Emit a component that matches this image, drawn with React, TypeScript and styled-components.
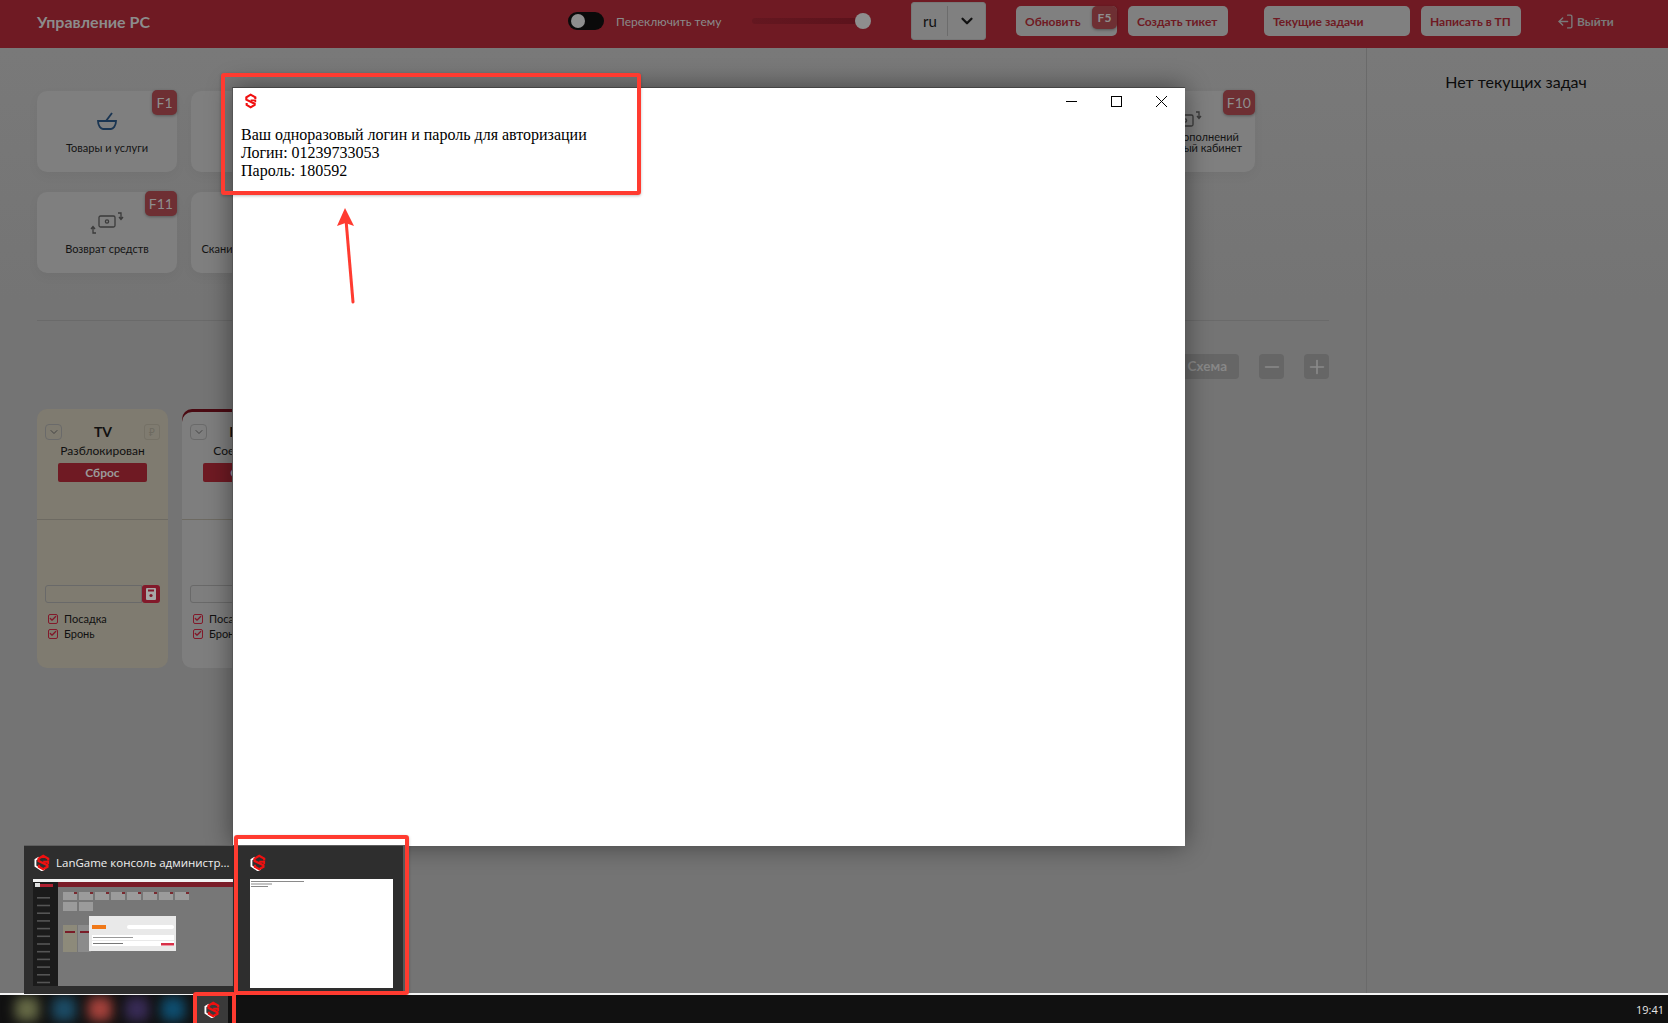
import styled, { createGlobalStyle } from 'styled-components';
import { ChevronDown, Minus, Plus, LogOut, Check } from 'lucide-react';

const GlobalStyle = createGlobalStyle`
    html, body { margin: 0; padding: 0; }
    body { font-family: 'Lato', 'Noto Sans', sans-serif; background: #767676; overflow: hidden; }
    * { box-sizing: border-box; }
`;

// карточки 2-7 целиком закрыты окном, текста на них не видно
const topCards = [
    { id: 1, title: 'Товары и услуги', key: 'F1', icon: 'bowl' },
    { id: 2 },
    { id: 3 },
    { id: 4 },
    { id: 5 },
    { id: 6 },
    { id: 7 },
    { id: 8, title: 'История пополнений через личный кабинет', key: 'F10', icon: 'money' },
    { id: 9, title: 'Возврат средств', key: 'F11', icon: 'money' },
    { id: 10, title: 'Сканирование\u00a0QR\u2011кода' },
];

const pcCards = [
    { name: 'TV', status: 'Разблокирован', warm: true },
    { name: 'PC 10', status: 'Соединение', warm: false },
];

const blurs = ['#666a46', '#1c4c66', '#a6423c', '#382b56', '#0e4e70'];

const Logo = ({ size, withWhite }: { size: number; withWhite?: boolean }) => (
    <svg width={size} height={size} viewBox='0 0 24 24' fill='none'>
        {withWhite && <polyline points='7,5 2,8 2,17 11,23 15,21' stroke='#fff' strokeWidth='2.6' />}
        <polyline
            points='20,9 20,6.5 13,2.5 6.5,6.5 6.5,10 19,16 19,18 13,21.5 7,18 7,15'
            stroke='#f01010'
            strokeWidth='3.2'
            strokeLinejoin='miter'
        />
        <polyline points='13,11 20,11 20,14' stroke='#f01010' strokeWidth='2.6' />
    </svg>
);

const BowlIcon = () => (
    <svg width='22' height='22' viewBox='0 0 22 22' fill='none' stroke='#1a3552' strokeWidth='1.8'>
        <path d='M2 10h18c0 5-3 8-5 8H7c-2 0-5-3-5-8z' />
        <path d='M10 10l6-8' />
    </svg>
);

const MoneyIcon = () => (
    <svg width='34' height='24' viewBox='0 0 34 24' fill='none' stroke='#3b3b3b' strokeWidth='1.3'>
        <rect x='9' y='5' width='16' height='11' rx='1.5' />
        <circle cx='17' cy='10.5' r='1.6' />
        <path d='M28 2h3v6M29 6l2 2.5L33 6' />
        <path d='M6 22H3v-6M1 18l2-2.5L5 18' />
    </svg>
);

const SaveIcon = () => (
    <svg width='10' height='12' viewBox='0 0 10 12'>
        <path d='M1 0h8a1 1 0 0 1 1 1v10a1 1 0 0 1-1 1H1a1 1 0 0 1-1-1V1a1 1 0 0 1 1-1z' fill='#a8a8a8' />
        <rect x='2' y='1.5' width='6' height='2' fill='#82192a' />
        <circle cx='5' cy='7.5' r='1.6' fill='#82192a' />
    </svg>
);

const MiniAdmin = () => (
    <svg width='200' height='107' viewBox='0 0 200 107'>
        <rect width='200' height='107' fill='#777' />
        <rect width='200' height='3' fill='#f2f2f2' />
        <rect y='3' width='25' height='104' fill='#1b1b1b' />
        <rect x='2' y='4' width='5' height='4' fill='#ddd' />
        <rect x='7' y='5' width='13' height='3' fill='#b02030' />
        <rect x='25' y='3' width='175' height='5' fill='#7a1c28' />
        {[0, 1, 2, 3, 4, 5, 6, 7, 8, 9, 10, 11].map(i => (
            <rect key={i} x='4' y={18 + i * 7.7} width='13' height='1.6' fill='#555' />
        ))}
        {[0, 1, 2, 3, 4, 5, 6, 7].map(i => (
            <g key={i}>
                <rect x={30 + i * 16} y='13' width='14' height='8' fill='#9b9b9b' />
                <rect x={41 + i * 16} y='13' width='3' height='2' fill='#7a2a30' />
            </g>
        ))}
        {[0, 1].map(i => (
            <rect key={i} x={30 + i * 16} y='23' width='14' height='9' fill='#9b9b9b' />
        ))}
        <rect x='30' y='46' width='14' height='27' fill='#8d8a7a' />
        <rect x='45' y='46' width='13' height='27' fill='#8b8b8b' />
        <rect x='32' y='52' width='10' height='2' fill='#7a1c28' />
        <rect x='47' y='52' width='9' height='2' fill='#7a1c28' />
        <rect x='56' y='37' width='87' height='35' fill='#e9e9e9' />
        <rect x='59' y='46' width='14' height='4' fill='#f07818' />
        <rect x='94' y='46' width='47' height='4' rx='2' fill='#fff' />
        <rect x='59' y='56' width='82' height='5' fill='#fff' />
        <rect x='59' y='62' width='82' height='5' fill='#fff' />
        <rect x='128' y='64' width='13' height='2.5' fill='#d83048' />
        <rect x='60' y='58' width='40' height='1' fill='#999' />
        <rect x='60' y='64' width='30' height='1' fill='#777' />
    </svg>
);

const MiniLogin = () => (
    <svg width='143' height='109' viewBox='0 0 143 109'>
        <rect width='143' height='109' fill='#fff' />
        <rect x='1' y='2' width='53' height='1' fill='#8a8a8a' />
        <rect x='1' y='4.5' width='21' height='1' fill='#8a8a8a' />
        <rect x='1' y='7' width='17' height='1' fill='#8a8a8a' />
    </svg>
);

const App = () => {
    return (
        <Page>
            <GlobalStyle />
            <TopBar>
                <Title>Управление РС</Title>
                <Toggle>
                    <Knob />
                </Toggle>
                <ToggleLabel>Переключить тему</ToggleLabel>
                <Slider>
                    <SliderKnob />
                </Slider>
                <LangSelect>
                    <span>ru</span>
                    <LangDivider />
                    <ChevronDown size={18} strokeWidth={3} color='#111' />
                </LangSelect>
                <BarButton $width={101} $left={30}>
                    Обновить
                    <KeyBadge $width={25}>F5</KeyBadge>
                </BarButton>
                <BarButton $width={100} $left={11}>
                    Создать тикет
                </BarButton>
                <BarButton $width={146} $left={36}>
                    Текущие задачи
                </BarButton>
                <BarButton $width={100} $left={11}>
                    Написать в ТП
                </BarButton>
                <Logout>
                    <LogOut size={17} style={{ transform: 'scaleX(-1)' }} />
                    Выйти
                </Logout>
            </TopBar>

            <Main>
                <Content>
                    <CardGrid>
                        {topCards.map(card => (
                            <ActionCard key={card.id}>
                                {card.key && <KeyCorner>{card.key}</KeyCorner>}
                                <IconSlot>
                                    {card.icon === 'bowl' && <BowlIcon />}
                                    {card.icon === 'money' && <MoneyIcon />}
                                </IconSlot>
                                {card.title && <CardTitle>{card.title}</CardTitle>}
                            </ActionCard>
                        ))}
                    </CardGrid>
                    <Divider />
                    <ZoomRow>
                        <SchemeButton>Схема</SchemeButton>
                        <SquareButton>
                            <Minus size={22} strokeWidth={1.8} />
                        </SquareButton>
                        <SquareButton>
                            <Plus size={22} strokeWidth={1.8} />
                        </SquareButton>
                    </ZoomRow>
                    <PcRow>
                        {pcCards.map(pc => (
                            <PcCard key={pc.name} $warm={pc.warm}>
                                <PcHead>
                                    <SmallBox>
                                        <ChevronDown size={12} />
                                    </SmallBox>
                                    <PcName>{pc.name}</PcName>
                                    <RubleBox>₽</RubleBox>
                                </PcHead>
                                <PcStatus>{pc.status}</PcStatus>
                                <ResetButton>Сброс</ResetButton>
                                <PcDivider />
                                <CommentRow>
                                    <CommentInput />
                                    <SaveButton>
                                        <SaveIcon />
                                    </SaveButton>
                                </CommentRow>
                                <CheckList>
                                    <CheckRow>
                                        <CheckBox>
                                            <Check size={9} strokeWidth={4} />
                                        </CheckBox>
                                        Посадка
                                    </CheckRow>
                                    <CheckRow>
                                        <CheckBox>
                                            <Check size={9} strokeWidth={4} />
                                        </CheckBox>
                                        Бронь
                                    </CheckRow>
                                </CheckList>
                            </PcCard>
                        ))}
                    </PcRow>
                </Content>
                <TaskPanel>Нет текущих задач</TaskPanel>
            </Main>

            <Taskbar>
                <BlurGroup>
                    {blurs.map(color => (
                        <BlurIcon key={color} $color={color} />
                    ))}
                </BlurGroup>
                <ActiveTask>
                    <Logo size={17} withWhite />
                </ActiveTask>
                <Clock>19:41</Clock>
            </Taskbar>

            {/* Окно браузера поверх страницы */}
            <LoginWindow>
                <WindowHead>
                    <Logo size={16} />
                    <WindowControls>
                        <svg width='11' height='11' viewBox='0 0 11 11' stroke='#000'>
                            <line x1='0' y1='5.5' x2='11' y2='5.5' />
                        </svg>
                        <svg width='11' height='11' viewBox='0 0 11 11' fill='none' stroke='#000'>
                            <rect x='0.5' y='0.5' width='10' height='10' />
                        </svg>
                        <svg width='11' height='11' viewBox='0 0 11 11' stroke='#000'>
                            <line x1='0' y1='0' x2='11' y2='11' />
                            <line x1='11' y1='0' x2='0' y2='11' />
                        </svg>
                    </WindowControls>
                </WindowHead>
                <WindowText>
                    Ваш одноразовый логин и пароль для авторизации
                    <br />
                    Логин: 01239733053
                    <br />
                    Пароль: 180592
                </WindowText>
            </LoginWindow>

            {/* Превью окон на панели задач */}
            <Preview>
                <PreviewPane $width={209}>
                    <PreviewHead $left={10}>
                        <Logo size={17} withWhite />
                        <PreviewTitle>LanGame консоль администр...</PreviewTitle>
                    </PreviewHead>
                    <PreviewShot $left={9}>
                        <MiniAdmin />
                    </PreviewShot>
                </PreviewPane>
                <PreviewPane $width={170}>
                    <PreviewHead $left={17}>
                        <Logo size={17} withWhite />
                    </PreviewHead>
                    <PreviewShot $left={17}>
                        <MiniLogin />
                    </PreviewShot>
                </PreviewPane>
            </Preview>

            {/* Красные пометки */}
            <MarkFrame $x={221} $y={73} $w={420} $h={122} />
            <MarkFrame $x={234} $y={835} $w={175} $h={160} />
            <TaskMark />
            <ArrowMark viewBox='0 0 30 100' width='30' height='100'>
                <line x1='22' y1='94' x2='15' y2='12' stroke='#ff3b30' strokeWidth='3' strokeLinecap='round' />
                <path d='M14 0l9 18-8.5-3-8.5 3z' fill='#ff3b30' />
            </ArrowMark>
        </Page>
    );
};

const Page = styled.div`
    position: relative;
    width: 1668px;
    height: 1023px;
    display: flex;
    flex-direction: column;
    overflow: hidden;
    background: linear-gradient(#7a7a7a, #747474 300px);
`;

const TopBar = styled.header`
    height: 48px;
    flex-shrink: 0;
    display: flex;
    align-items: center;
    padding: 0 0 6px 37px;
    background: #6f1a23;
    color: #8a8a8a;
`;

const Title = styled.div`
    width: 531px;
    font-size: 16px;
    font-weight: 700;
    color: #8c8c8c;
`;

const Toggle = styled.div`
    width: 36px;
    height: 18px;
    padding: 2px 3px;
    border-radius: 9px;
    background: #0a0a0a;
`;

const Knob = styled.div`
    width: 14px;
    height: 14px;
    border-radius: 50%;
    background: #8e8e8e;
`;

const ToggleLabel = styled.div`
    width: 136px;
    margin-left: 12px;
    font-size: 12px;
`;

const Slider = styled.div`
    position: relative;
    width: 119px;
    height: 6px;
    border-radius: 3px;
    background: linear-gradient(90deg, #641720, #5b121b);
`;

const SliderKnob = styled.div`
    position: absolute;
    right: 0;
    top: -5px;
    width: 16px;
    height: 16px;
    border-radius: 50%;
    background: #8e8e8e;
`;

const LangSelect = styled.div`
    width: 75px;
    height: 38px;
    margin-left: 40px;
    display: flex;
    align-items: center;
    gap: 10px;
    padding-left: 11px;
    border-radius: 3px;
    border: 1px solid #777;
    background: #808080;
    color: #111;
    font-size: 15px;
`;

const LangDivider = styled.div`
    width: 1px;
    height: 30px;
    background: #6c6c6c;
`;

const BarButton = styled.div<{ $width: number; $left: number }>`
    position: relative;
    width: ${p => p.$width}px;
    height: 30px;
    margin-left: ${p => p.$left}px;
    padding-left: 9px;
    display: flex;
    align-items: center;
    border-radius: 5px;
    background: #808080;
    color: #6f1a23;
    font-size: 12px;
    font-weight: 700;
    white-space: nowrap;
`;

const KeyBadge = styled.span<{ $width: number }>`
    position: absolute;
    top: 0;
    right: 0;
    width: ${p => p.$width}px;
    height: 23px;
    display: flex;
    align-items: center;
    justify-content: center;
    border-radius: 5px;
    background: #6e2f33;
    color: #8e8e8e;
    font-size: 12px;
    font-weight: 700;
    box-shadow: 0 1px 3px rgba(0, 0, 0, 0.35);
`;

const Logout = styled.div`
    margin-left: 36px;
    display: flex;
    align-items: center;
    gap: 3px;
    color: #7a7a7a;
    font-size: 12px;
    font-weight: 700;
`;

const Main = styled.main`
    flex: 1;
    display: flex;
    min-height: 0;
`;

const Content = styled.div`
    width: 1367px;
    padding: 43px 37px 0 37px;
    border-right: 1px solid #6a6a6a;
`;

const CardGrid = styled.div`
    display: grid;
    grid-template-columns: repeat(8, 140px);
    grid-auto-rows: 81px;
    gap: 20px 14px;
`;

const ActionCard = styled.div`
    position: relative;
    display: flex;
    flex-direction: column;
    align-items: center;
    padding-top: 21px;
    border-radius: 10px;
    background: #7f7f7f;
    box-shadow: 0 4px 12px rgba(0, 0, 0, 0.04);
`;

const KeyCorner = styled.span`
    position: absolute;
    top: -1px;
    right: 0;
    min-width: 25px;
    height: 25px;
    padding: 0 4px;
    display: flex;
    align-items: center;
    justify-content: center;
    border-radius: 5px;
    background: #6e2f33;
    color: #8e8e8e;
    font-size: 14px;
    box-shadow: 0 1px 3px rgba(0, 0, 0, 0.3);
`;

const IconSlot = styled.div`
    height: 20px;
    display: flex;
    align-items: center;
    justify-content: center;
`;

const CardTitle = styled.div`
    height: 21px;
    padding: 0 8px;
    display: flex;
    align-items: flex-end;
    text-align: center;
    font-size: 11px;
    line-height: 11px;
    color: #141414;
`;

const Divider = styled.div`
    height: 1px;
    margin-top: 47px;
    background: #6a6a6a;
`;

const ZoomRow = styled.div`
    height: 25px;
    margin-top: 33px;
    display: flex;
    justify-content: flex-end;
    gap: 20px;
`;

const SchemeButton = styled.div`
    width: 100px;
    display: flex;
    align-items: center;
    justify-content: flex-end;
    padding: 0 12px 2px 0;
    border-radius: 4px;
    background: #666;
    color: #888;
    font-size: 13.5px;
    font-weight: 700;
`;

const SquareButton = styled.div`
    width: 25px;
    display: flex;
    align-items: center;
    justify-content: center;
    border-radius: 4px;
    background: #666;
    color: #8a8a8a;
`;

const PcRow = styled.div`
    margin-top: 30px;
    display: flex;
    gap: 14px;
`;

const PcCard = styled.div<{ $warm: boolean }>`
    width: 131px;
    height: 259px;
    padding: 14px 8px 0;
    display: flex;
    flex-direction: column;
    border-radius: 10px;
    background: ${p => (p.$warm ? '#7f7b70' : '#7e7e7e')};
    box-shadow: ${p => (p.$warm ? 'none' : 'inset 0 3px 0 #4a0a12')};
    color: #111;
`;

const PcHead = styled.div`
    display: flex;
    align-items: center;
    justify-content: space-between;
`;

const SmallBox = styled.div`
    width: 17px;
    height: 16px;
    display: flex;
    align-items: center;
    justify-content: center;
    border: 1px solid #6a6a6a;
    border-radius: 4px;
    color: #444;
`;

const PcName = styled.div`
    font-size: 14px;
    font-weight: 700;
`;

const RubleBox = styled.div`
    width: 16px;
    height: 16px;
    display: flex;
    align-items: center;
    justify-content: center;
    border: 1px solid #757166;
    border-radius: 3px;
    color: #6d6a60;
    font-size: 10px;
`;

const PcStatus = styled.div`
    margin-top: 2px;
    text-align: center;
    font-size: 12px;
    line-height: 18px;
    white-space: nowrap;
`;

const ResetButton = styled.div`
    width: 89px;
    height: 19px;
    margin: 3px auto 0;
    display: flex;
    align-items: center;
    justify-content: center;
    border-radius: 2px;
    background: #6f1a23;
    color: #9a9a9a;
    font-size: 12px;
    font-weight: 700;
`;

const PcDivider = styled.div`
    height: 1px;
    margin: 37px -8px 0;
    background: #6d6a62;
`;

const CommentRow = styled.div`
    margin-top: 65px;
    height: 18px;
    display: flex;
`;

const CommentInput = styled.div`
    flex: 1;
    border: 1px solid #696969;
    border-radius: 3px 0 0 3px;
`;

const SaveButton = styled.div`
    width: 18px;
    display: flex;
    align-items: center;
    justify-content: center;
    border-radius: 3px;
    background: #82192a;
`;

const CheckList = styled.div`
    margin-top: 8px;
`;

const CheckRow = styled.div`
    height: 15px;
    padding-left: 3px;
    display: flex;
    align-items: center;
    gap: 6px;
    font-size: 11px;
`;

const CheckBox = styled.span`
    width: 10px;
    height: 10px;
    display: flex;
    align-items: center;
    justify-content: center;
    border: 1px solid #82192a;
    border-radius: 2px;
    color: #82192a;
`;

const TaskPanel = styled.aside`
    flex: 1;
    padding: 26px 3px 0 0;
    text-align: center;
    font-size: 16px;
    line-height: 16px;
    color: #0c0c0c;
`;

const Taskbar = styled.footer`
    height: 30px;
    flex-shrink: 0;
    display: flex;
    align-items: stretch;
    border-top: 2px solid #f4f4f4;
    background: #111;
    color: #e6e6e6;
`;

const BlurGroup = styled.div`
    width: 197px;
    display: flex;
    align-items: center;
    gap: 12.5px;
    padding-left: 15px;
    overflow: hidden;
`;

const BlurIcon = styled.div<{ $color: string }>`
    width: 24px;
    height: 24px;
    flex-shrink: 0;
    border-radius: 6px;
    background: ${p => p.$color};
    filter: blur(6px);
`;

const ActiveTask = styled.div`
    width: 31px;
    display: flex;
    align-items: center;
    justify-content: center;
    background: #3a3a3a;
`;

const Clock = styled.div`
    margin-left: auto;
    padding-right: 4px;
    align-self: center;
    font-family: 'Open Sans', sans-serif;
    font-size: 11px;
`;

const LoginWindow = styled.section`
    position: absolute;
    left: 232px;
    top: 87px;
    width: 953px;
    height: 759px;
    background: #fff;
    border-top: 1px solid #444;
    border-left: 1px solid #555;
    box-shadow: 0 0 24px rgba(0, 0, 0, 0.45);
`;

const WindowHead = styled.div`
    height: 26px;
    margin-bottom: 12px;
    display: flex;
    align-items: center;
    justify-content: space-between;
    padding: 0 18px 0 9px;
`;

const WindowControls = styled.div`
    display: flex;
    align-items: center;
    gap: 34px;
`;

const WindowText = styled.div`
    padding-left: 8px;
    font-family: 'Liberation Serif', 'Times New Roman', serif;
    font-size: 16px;
    line-height: 18px;
    color: #000;
`;

const Preview = styled.div`
    position: absolute;
    left: 24px;
    top: 845px;
    height: 149px;
    display: flex;
    background: #2e2e2e;
    border-top: 1px solid #5e5e5e;
    border-right: 3px solid #595959;
`;

const PreviewPane = styled.div<{ $width: number }>`
    width: ${p => p.$width}px;
`;

const PreviewHead = styled.div<{ $left: number }>`
    height: 33px;
    padding-left: ${p => p.$left}px;
    display: flex;
    align-items: center;
    gap: 5px;
`;

const PreviewTitle = styled.span`
    font-family: 'Open Sans', sans-serif;
    font-size: 11.5px;
    color: #f0f0f0;
    white-space: nowrap;
`;

const PreviewShot = styled.div<{ $left: number }>`
    padding-left: ${p => p.$left}px;
    line-height: 0;
    filter: blur(0.4px);
`;

const MarkFrame = styled.div<{ $x: number; $y: number; $w: number; $h: number }>`
    position: absolute;
    left: ${p => p.$x}px;
    top: ${p => p.$y}px;
    width: ${p => p.$w}px;
    height: ${p => p.$h}px;
    border: 4px solid #ff3b30;
    border-radius: 3px;
    box-shadow: 0 1px 3px rgba(0, 0, 0, 0.25);
`;

const TaskMark = styled.div`
    position: absolute;
    left: 193px;
    top: 992px;
    width: 43px;
    height: 40px;
    border: 4px solid #ff3b30;
    border-radius: 3px;
`;

const ArrowMark = styled.svg`
    position: absolute;
    left: 331px;
    top: 208px;
`;

export default App;
